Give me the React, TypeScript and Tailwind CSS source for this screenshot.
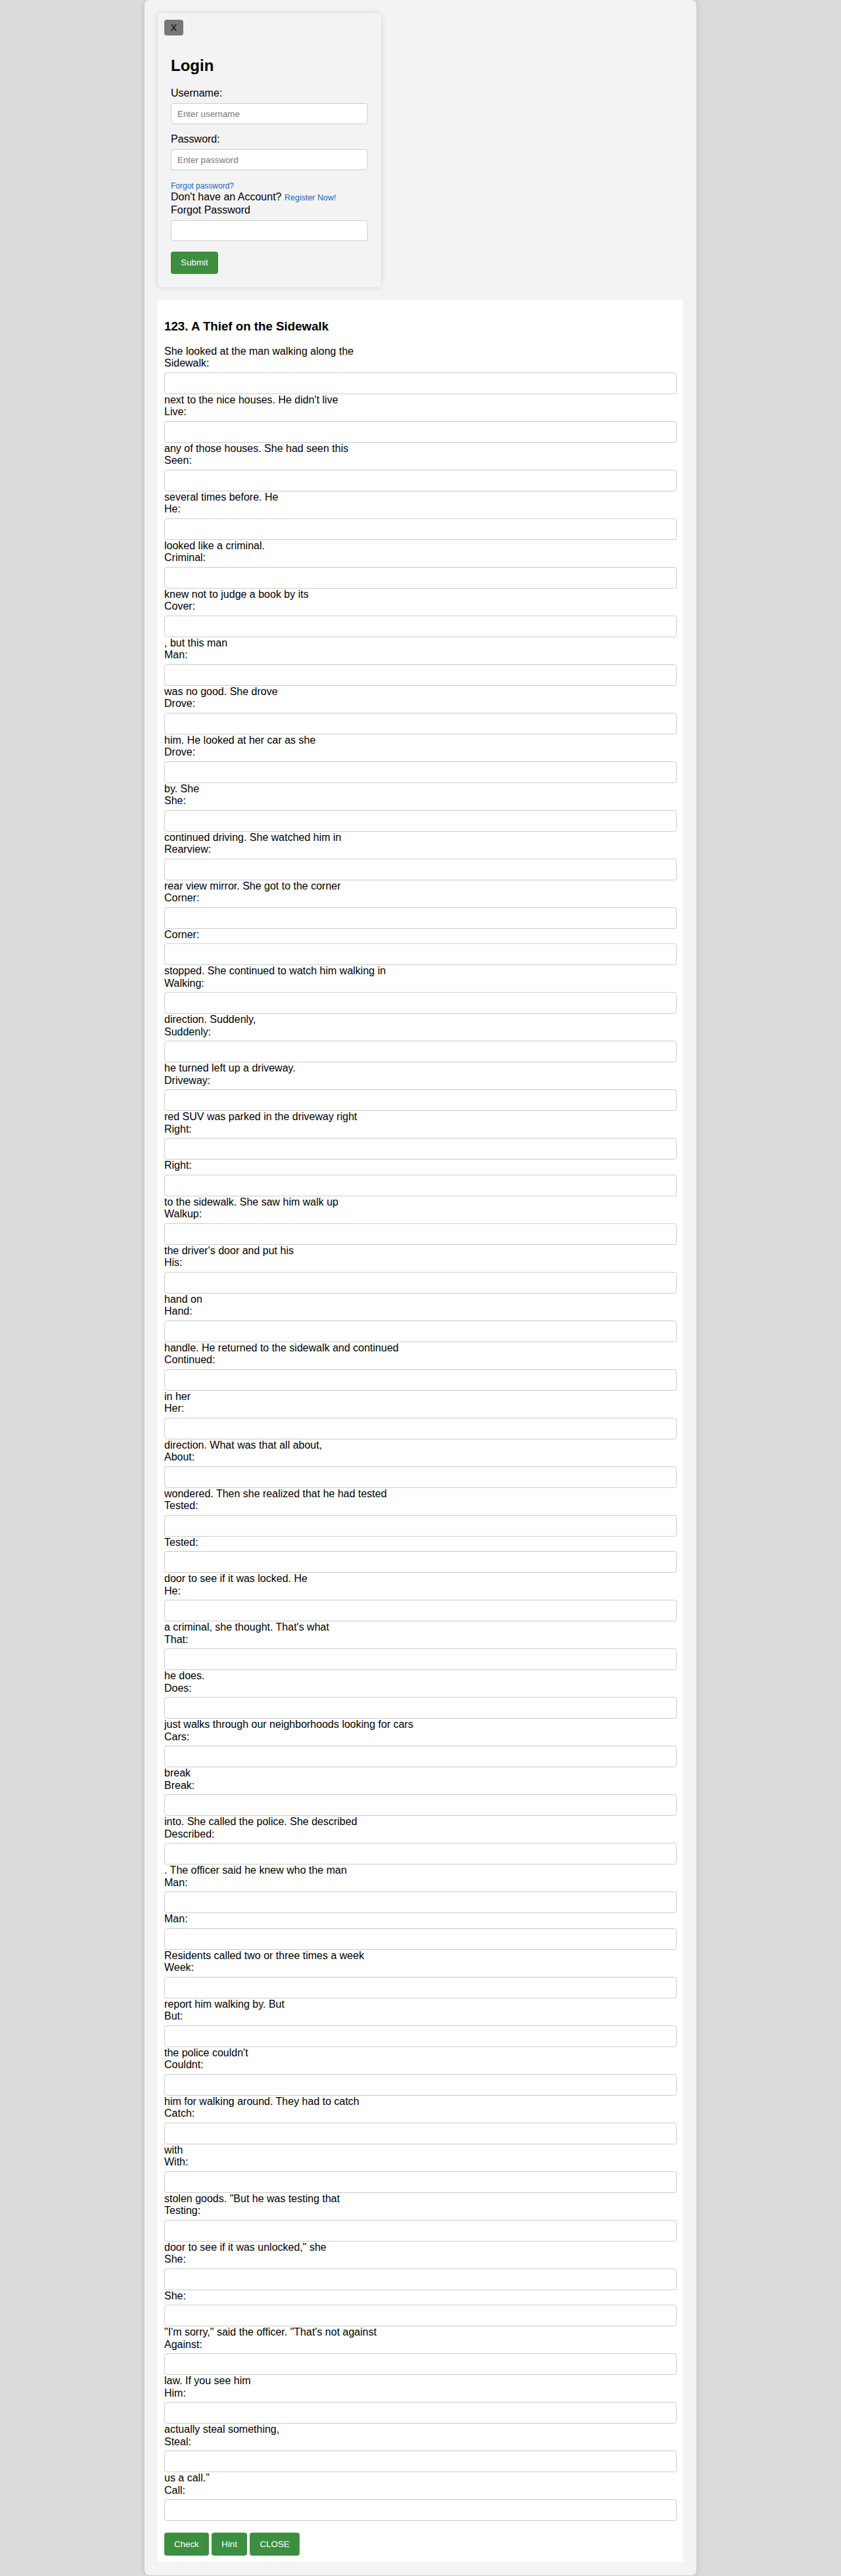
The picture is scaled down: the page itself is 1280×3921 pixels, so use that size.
const BLANKS: { text: string; label: string }[] = [
  { text: 'She looked at the man walking along the', label: 'Sidewalk' },
  { text: "next to the nice houses. He didn't live", label: 'Live' },
  { text: 'any of those houses. She had seen this', label: 'Seen' },
  { text: 'several times before. He', label: 'He' },
  { text: 'looked like a criminal.', label: 'Criminal' },
  { text: 'knew not to judge a book by its', label: 'Cover' },
  { text: ', but this man', label: 'Man' },
  { text: 'was no good. She drove', label: 'Drove' },
  { text: 'him. He looked at her car as she', label: 'Drove' },
  { text: 'by. She', label: 'She' },
  { text: 'continued driving. She watched him in', label: 'Rearview' },
  { text: 'rear view mirror. She got to the corner', label: 'Corner' },
  { text: '', label: 'Corner' },
  { text: 'stopped. She continued to watch him walking in', label: 'Walking' },
  { text: 'direction. Suddenly,', label: 'Suddenly' },
  { text: 'he turned left up a driveway.', label: 'Driveway' },
  { text: 'red SUV was parked in the driveway right', label: 'Right' },
  { text: '', label: 'Right' },
  { text: 'to the sidewalk. She saw him walk up', label: 'Walkup' },
  { text: "the driver's door and put his", label: 'His' },
  { text: 'hand on', label: 'Hand' },
  { text: 'handle. He returned to the sidewalk and continued', label: 'Continued' },
  { text: 'in her', label: 'Her' },
  { text: 'direction. What was that all about,', label: 'About' },
  { text: 'wondered. Then she realized that he had tested', label: 'Tested' },
  { text: '', label: 'Tested' },
  { text: 'door to see if it was locked. He', label: 'He' },
  { text: "a criminal, she thought. That's what", label: 'That' },
  { text: 'he does.', label: 'Does' },
  { text: 'just walks through our neighborhoods looking for cars', label: 'Cars' },
  { text: 'break', label: 'Break' },
  { text: 'into. She called the police. She described', label: 'Described' },
  { text: '. The officer said he knew who the man', label: 'Man' },
  { text: '', label: 'Man' },
  { text: 'Residents called two or three times a week', label: 'Week' },
  { text: 'report him walking by. But', label: 'But' },
  { text: "the police couldn't", label: 'Couldnt' },
  { text: 'him for walking around. They had to catch', label: 'Catch' },
  { text: 'with', label: 'With' },
  { text: 'stolen goods. "But he was testing that', label: 'Testing' },
  { text: 'door to see if it was unlocked," she', label: 'She' },
  { text: '', label: 'She' },
  { text: '"I\'m sorry," said the officer. "That\'s not against', label: 'Against' },
  { text: 'law. If you see him', label: 'Him' },
  { text: 'actually steal something,', label: 'Steal' },
  { text: 'us a call."', label: 'Call' },
]

const FONT = "font-['Liberation_Sans',Arial,sans-serif]"

function LoginBox() {
  return (
    <div className="relative w-[340px] rounded-[5px] bg-[#f3f3f3] p-[20px] shadow-[0_0_10px_rgba(0,0,0,0.12)]">
      <button
        type="button"
        className="absolute left-[10px] top-[10px] flex h-[24px] w-[29px] items-center justify-center rounded-[4px] bg-[#777777] text-[14px] leading-none text-black"
      >
        X
      </button>

      <h2 className="mt-[46px] text-[24px] font-bold leading-[27.6px]">Login</h2>

      <label className="mt-[19px] block text-[16px] leading-[18.4px]">Username:</label>
      <input
        placeholder="Enter username"
        className="mt-[6px] block h-[32px] w-[300px] rounded-[4px] border border-[#cccccc] bg-white px-[9px] text-[13.33px] placeholder:text-[#757575]"
      />

      <label className="mt-[14px] block text-[16px] leading-[18.4px]">Password:</label>
      <input
        type="password"
        placeholder="Enter password"
        className="mt-[6px] block h-[32px] w-[300px] rounded-[4px] border border-[#cccccc] bg-white px-[9px] text-[13.33px] placeholder:text-[#757575]"
      />

      <a className="mt-[18px] block text-[12px] leading-[13.8px] text-[#1565c0]">Forgot password?</a>
      <p className="text-[16px] leading-[18.4px]">
        Don't have an Account? <a className="text-[12.5px] text-[#1565c0]">Register Now!</a>
      </p>
      <p className="text-[16px] leading-[18.4px]">Forgot Password</p>
      <input className="mt-[6px] block h-[32px] w-[300px] rounded-[4px] border border-[#cccccc] bg-white px-[9px]" />

      <button
        type="button"
        className="mt-[16px] block h-[34px] w-[72px] rounded-[4px] bg-[#3e8e41] text-[13.33px] text-white"
      >
        Submit
      </button>
    </div>
  )
}

export default function App() {
  return (
    <div className={`min-h-[3921px] bg-[#dcdbd9] text-black ${FONT}`}>
      <div className="ml-[220px] w-[840px] rounded-[8px] bg-[#f3f3f3] p-[20px] shadow-[0_0_8px_rgba(0,0,0,0.15)]">
        <LoginBox />

        <div className="mt-[20px] bg-white p-[10px]">
          <h3 className="my-[18.72px] text-[18.72px] font-bold leading-[21.5px]">
            123. A Thief on the Sidewalk
          </h3>

          {BLANKS.map((b, i) => (
            <div key={i}>
              {b.text && <p className="text-[16px] leading-[18.5px]">{b.text}</p>}
              <label className="block text-[16px] leading-[18.5px]">{b.label}:</label>
              <input className="mt-[4px] block h-[33px] w-full rounded-[4px] border border-[#cccccc] bg-white px-[8px]" />
            </div>
          ))}

          <div className="mt-[18px] flex gap-[4.5px]">
            <button type="button" className="h-[35px] rounded-[4px] bg-[#3e8e41] px-[15px] text-[13.33px] text-white">
              Check
            </button>
            <button type="button" className="h-[35px] rounded-[4px] bg-[#3e8e41] px-[15px] text-[13.33px] text-white">
              Hint
            </button>
            <button type="button" className="h-[35px] rounded-[4px] bg-[#3e8e41] px-[15px] text-[13.33px] text-white">
              CLOSE
            </button>
          </div>
        </div>
      </div>
    </div>
  )
}
